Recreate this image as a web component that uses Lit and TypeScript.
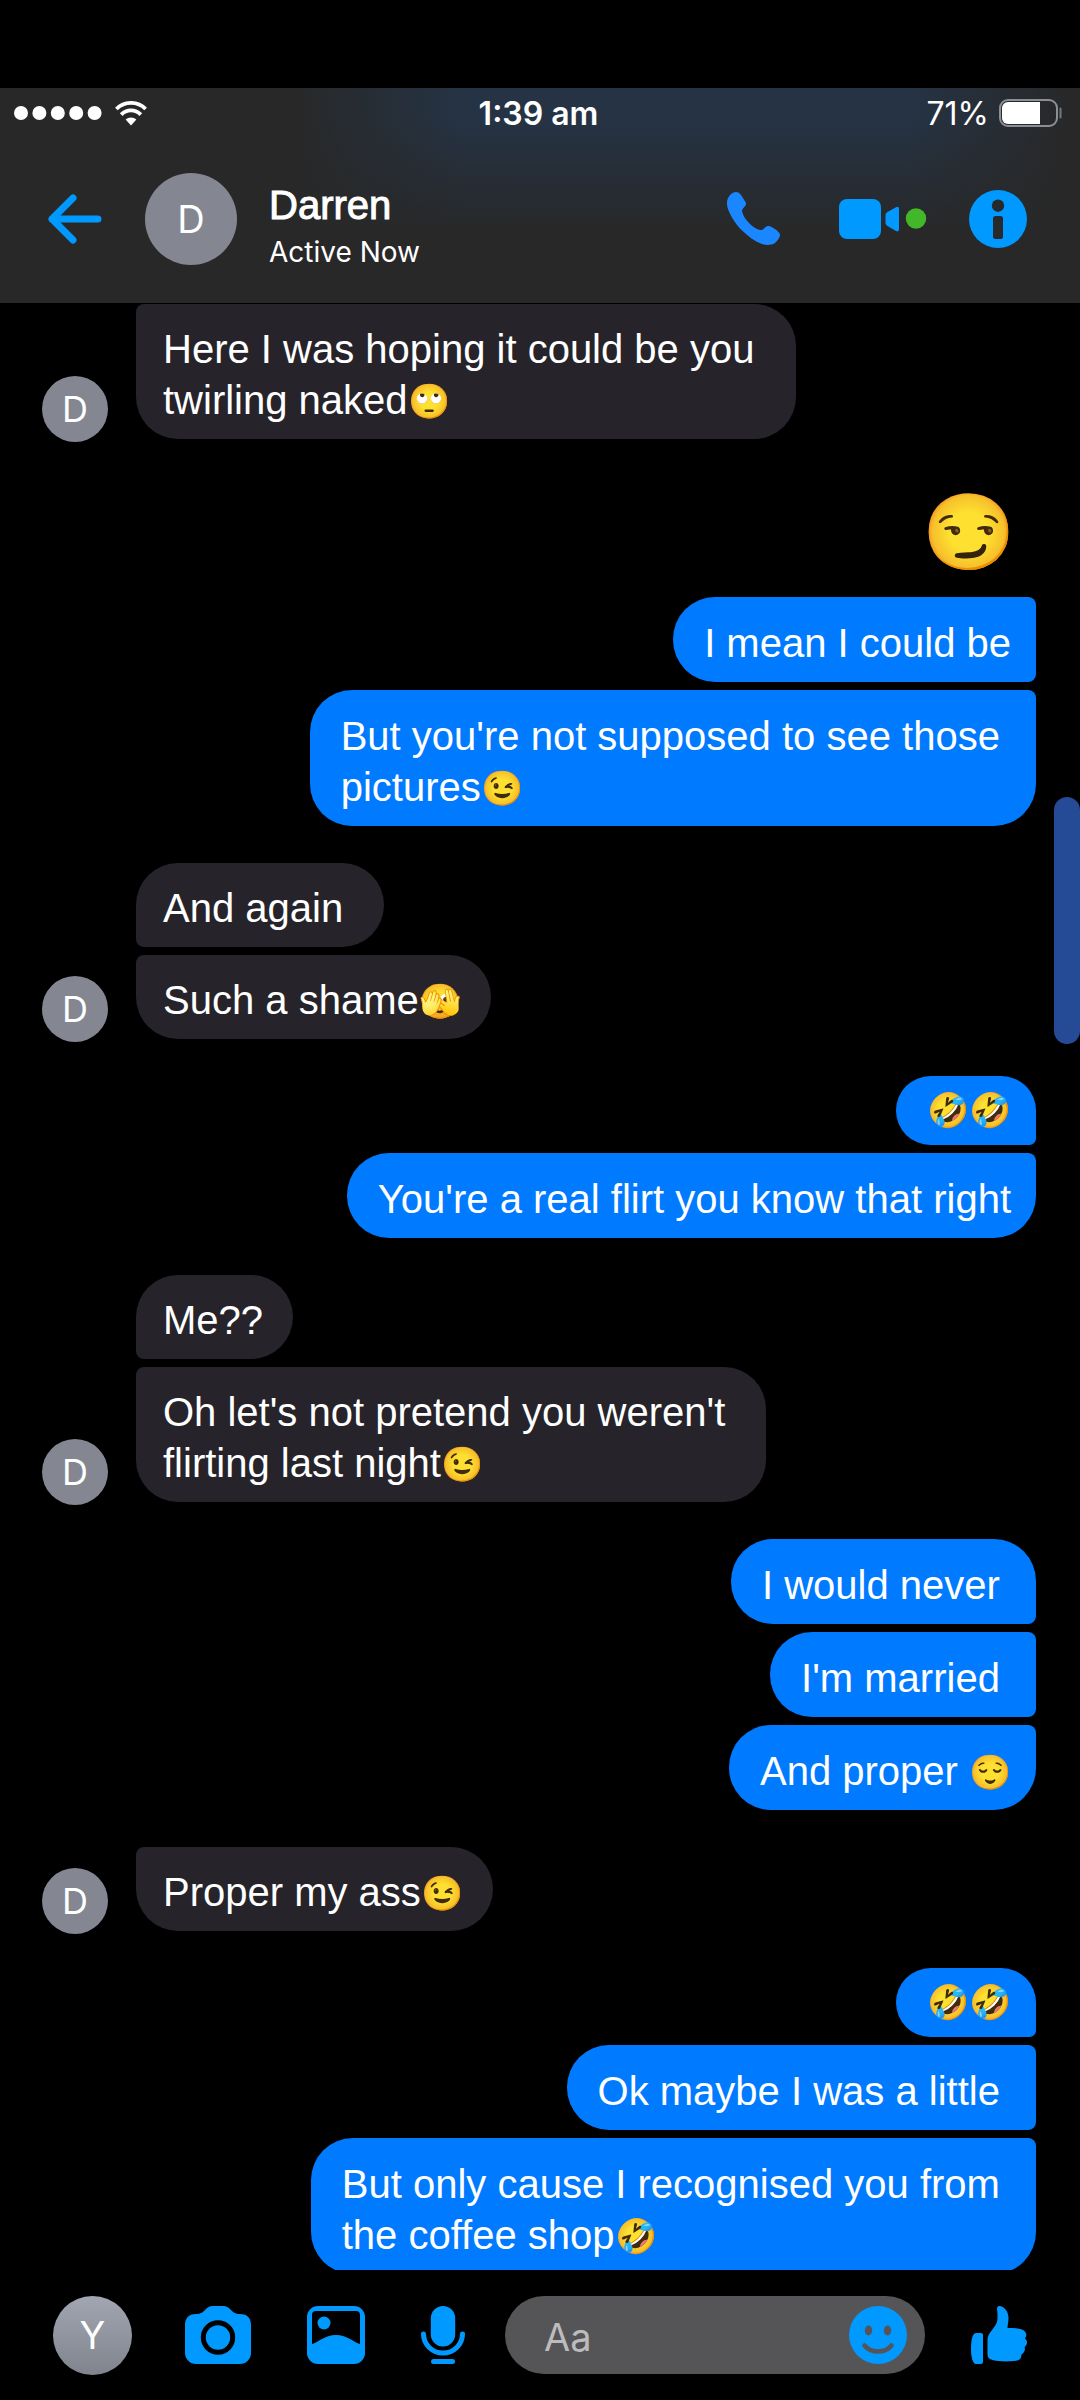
import { LitElement, html, css, nothing } from "lit";
import { customElement, property } from "lit/decorators.js";

type Message = {
  lines: string[];
  kind?: "text" | "emoji" | "sticker";
};

type Group = {
  from: "them" | "me";
  messages: Message[];
  joinedTop?: boolean;
};

const conversation: Group[] = [
  {
    from: "them",
    joinedTop: true,
    messages: [{ lines: ["Here I was hoping it could be you\u00a0", "twirling naked🙄"] }],
  },
  {
    from: "me",
    messages: [
      { lines: ["😏"], kind: "sticker" },
      { lines: ["I mean I could be"] },
      { lines: ["But you're not supposed to see those\u00a0", "pictures😉"] },
    ],
  },
  {
    from: "them",
    messages: [{ lines: ["And again\u00a0"] }, { lines: ["Such a shame🫣"] }],
  },
  {
    from: "me",
    messages: [
      { lines: ["🤣🤣"], kind: "emoji" },
      { lines: ["You're a real flirt you know that right"] },
    ],
  },
  {
    from: "them",
    messages: [
      { lines: ["Me??"] },
      { lines: ["Oh let's not pretend you weren't\u00a0", "flirting last night😉"] },
    ],
  },
  {
    from: "me",
    messages: [
      { lines: ["I would never\u00a0"] },
      { lines: ["I'm married\u00a0"] },
      { lines: ["And proper 😌"] },
    ],
  },
  { from: "them", joinedTop: true, messages: [{ lines: ["Proper my ass😉"] }] },
  {
    from: "me",
    messages: [
      { lines: ["🤣🤣"], kind: "emoji" },
      { lines: ["Ok maybe I was a little\u00a0"] },
      { lines: ["But only cause I recognised you from\u00a0", "the coffee shop🤣"] },
    ],
  },
];

@customElement("status-bar")
export class StatusBar extends LitElement {
  static styles = css`
    :host {
      display: grid;
      grid-template-columns: 1fr auto 1fr;
      align-items: center;
      height: 50px;
      padding: 0 17px 0 14px;
      font-size: 32px;
    }
    .signal {
      display: flex;
      align-items: center;
      gap: 13px;
    }
    .time {
      font-weight: 600;
    }
    .power {
      display: flex;
      align-items: center;
      justify-content: flex-end;
      gap: 10px;
    }
    svg {
      display: block;
    }
  `;

  render() {
    return html`
      <div class="signal">
        <svg width="88" height="14" viewBox="0 0 88 14" fill="#fff" aria-hidden="true">
          <circle cx="7" cy="7" r="7" />
          <circle cx="25.4" cy="7" r="7" />
          <circle cx="43.8" cy="7" r="7" />
          <circle cx="62.2" cy="7" r="7" />
          <circle cx="80.6" cy="7" r="7" />
        </svg>
        <svg width="32" height="25" viewBox="0 0 32 25" fill="none" stroke="#fff" stroke-width="3.8" aria-hidden="true">
          <path d="M1.4 8A20.5 20.5 0 0 1 30.6 8" />
          <path d="M6.2 13.6A13.6 13.6 0 0 1 25.8 13.6" />
          <path d="M10.6 18.6A8 8 0 0 1 21.4 18.6L16 24.4Z" fill="#fff" stroke="none" />
        </svg>
      </div>
      <div class="time">1:39 am</div>
      <div class="power">
        <span>71%</span>
        <svg width="64" height="28" viewBox="0 0 64 28" aria-hidden="true">
          <rect x="1" y="1" width="57" height="26" rx="8" fill="none" stroke="#8c9096" stroke-width="2" />
          <path d="M9 3H41V25H9A6 6 0 0 1 3 19V9A6 6 0 0 1 9 3Z" fill="#fff" />
          <path d="M61.500 9.500V18.500" stroke="#74787d" stroke-width="2" stroke-linecap="round" />
        </svg>
      </div>
    `;
  }
}

@customElement("chat-header")
export class ChatHeader extends LitElement {
  static styles = css`
    :host {
      display: flex;
      align-items: center;
      height: 161px;
      padding: 0 53px 4px 48px;
    }
    button {
      display: block;
      padding: 0;
      border: 0;
      background: none;
      cursor: pointer;
    }
    svg {
      display: block;
    }
    .avatar {
      display: grid;
      place-items: center;
      width: 92px;
      height: 92px;
      margin: 0 32px 0 43px;
      border-radius: 50%;
      background: #848791;
      font-size: 38px;
    }
    .who {
      flex: 1;
      padding-top: 16px;
    }
    h1 {
      margin: 0;
      font: 400 40px/50px "Liberation Sans", Arial, sans-serif;
      -webkit-text-stroke: 1px #fff;
    }
    p {
      margin: 0;
      font-size: 28px;
      line-height: 44px;
    }
    .actions {
      display: flex;
      align-items: center;
      gap: 42px;
    }
    .call {
      margin-right: 17px;
    }
  `;

  render() {
    return html`
      <button aria-label="Back">
        <svg width="54" height="50" viewBox="0 0 54 50" fill="none" stroke="#0099ff" stroke-width="7" stroke-linecap="round" stroke-linejoin="round" aria-hidden="true">
          <path d="M25 4L4 25L25 46M4 25H50" />
        </svg>
      </button>
      <div class="avatar">D</div>
      <div class="who">
        <h1>Darren</h1>
        <p>Active Now</p>
      </div>
      <div class="actions">
        <button class="call" aria-label="Call">
          <svg width="53" height="53" viewBox="0 0 53 53" fill="#1a86ff" aria-hidden="true">
            <path d="M9 0C11 0 12.5 1 14 3L18.5 10C19.5 12 19 13 17.5 14.8C15.5 17 14.8 18 15.2 20C16.5 24.5 19 28 22.5 31.5C25.5 34.5 29 37 33 38C35 38.3 36 37.5 37.500 36C39.5 34 41.5 33.600 43.5 34.5C46 35.600 49 37.5 51 39.5C53 41.5 53.500 43 52.5 45C51 48 49 50.5 47 51.8C44 53.300 39 53.3 35 52C28 49.5 21 44.5 14 37.5C7 30 2 21 .4 15C-.2 12 -.2 9 .8 6.5C2 4 4 2 6 .8C7 .3 8 0 9 0Z" />
          </svg>
        </button>
        <button aria-label="Video call, available">
          <svg width="88" height="42" viewBox="0 0 88 42" fill="#0099ff" aria-hidden="true">
            <rect y="1" width="42" height="40" rx="8" />
            <path d="M46.5 17Q46.5 15 48.5 14L57 9.2Q60 7.8 60 11V31Q60 34.500 57 33L48.5 28Q46.5 27 46.5 25Z" />
            <circle cx="77" cy="20.5" r="10.2" fill="#42b72a" />
          </svg>
        </button>
        <button aria-label="Conversation details">
          <svg width="58" height="58" viewBox="0 0 58 58" aria-hidden="true">
            <circle cx="29" cy="29" r="29" fill="#0099ff" />
            <circle cx="29" cy="15.7" r="6.2" fill="#262a2c" />
            <rect x="24" y="26" width="10" height="23" rx="2.5" fill="#262a2c" />
          </svg>
        </button>
      </div>
    `;
  }
}

@customElement("message-group")
export class MessageGroup extends LitElement {
  @property({ attribute: false }) group!: Group;

  static styles = css`
    :host {
      display: block;
    }
    .group {
      display: flex;
      align-items: flex-end;
      padding: 0 44px 0 42px;
    }
    .me {
      justify-content: flex-end;
    }
    .avatar {
      display: grid;
      place-items: center;
      flex: none;
      width: 66px;
      height: 66px;
      margin: 0 28px -3px 0;
      border-radius: 50%;
      background: #848791;
      font-size: 36px;
    }
    .stack {
      display: flex;
      flex-direction: column;
      align-items: flex-start;
      gap: 8px;
    }
    .me .stack {
      align-items: flex-end;
    }
    .bubble {
      padding: 20px 30px 13px 27px;
      border-radius: 8px 42px 42px 8px;
      background: #26242a;
      font: 400 40px/51px "Liberation Sans", Arial, sans-serif;
    }
    .them .bubble.first {
      border-top-left-radius: 42px;
    }
    .them .bubble.last {
      border-bottom-left-radius: 42px;
    }
    .me .bubble {
      padding: 21px 25px 13px 31px;
      border-radius: 42px 8px 8px 42px;
      background: #007aff;
    }
    .me .bubble.first {
      border-top-right-radius: 42px;
    }
    .me .bubble.last {
      border-bottom-right-radius: 42px;
    }
    .me .bubble.emoji {
      padding-top: 16px;
      padding-bottom: 18px;
      line-height: 35px;
    }
    .glyph {
      font-size: 34px;
      line-height: 0;
      vertical-align: 1px;
    }
    .sticker {
      padding: 0 21px 4px 0;
      font-size: 75px;
      line-height: 109px;
    }
  `;

  private line(text: string) {
    const parts = text
      .split(/(\p{Extended_Pictographic}+)/u)
      .map((part, i) => (i % 2 ? html`<span class="glyph">${part}</span>` : part));
    return html`<div>${parts}</div>`;
  }

  render() {
    const { from, messages, joinedTop } = this.group;
    const lastIndex = messages.length - 1;
    return html`
      <div class="group ${from}">
        ${from === "them" ? html`<div class="avatar">D</div>` : nothing}
        <div class="stack">
          ${messages.map((m, i) => {
            if (m.kind === "sticker") return html`<div class="sticker">${m.lines[0]}</div>`;
            const cls = [
              "bubble",
              m.kind === "emoji" ? "emoji" : "",
              i === 0 && !joinedTop ? "first" : "",
              i === lastIndex ? "last" : "",
            ].join(" ");
            return html`<div class=${cls}>${m.lines.map((l) => this.line(l))}</div>`;
          })}
        </div>
      </div>
    `;
  }
}

@customElement("chat-composer")
export class ChatComposer extends LitElement {
  static styles = css`
    :host {
      display: flex;
      align-items: center;
      height: 130px;
      padding: 0 53px;
    }
    button {
      display: block;
      flex: none;
      padding: 0;
      border: 0;
      background: none;
      cursor: pointer;
    }
    svg {
      display: block;
    }
    .avatar {
      display: grid;
      place-items: center;
      flex: none;
      width: 79px;
      height: 79px;
      border-radius: 50%;
      background: linear-gradient(#a1a6b2, #80848d);
      font-size: 38px;
    }
    .tools {
      display: flex;
      gap: 56px;
      margin: 0 40px 0 53px;
    }
    .field {
      display: flex;
      align-items: center;
      flex: 1;
      min-width: 0;
      height: 78px;
      margin-right: 46px;
      padding: 0 18px 0 39px;
      border-radius: 39px;
      background: #555557;
    }
    input {
      flex: 1;
      min-width: 0;
      padding: 4px 0 0;
      border: 0;
      outline: 0;
      background: none;
      color: #fff;
      font: 400 38px/50px Inter, sans-serif;
    }
    input::placeholder {
      color: #bcbcbe;
      opacity: 1;
    }
  `;

  render() {
    return html`
      <div class="avatar">Y</div>
      <div class="tools">
        <button aria-label="Camera">
          <svg width="66" height="58" viewBox="0 0 66 58" fill="#0099ff" aria-hidden="true">
            <path d="M0 19C0 11 5 8 11 8C16 8 18 6 20 4C22 2 24 0 28 0H38C42 0 44 2 46 4C48 6 50 8 55 8C61 8 66 11 66 19V47A11 11 0 0 1 55 58H11A11 11 0 0 1 0 47Z" />
            <circle cx="33" cy="31.5" r="14.7" stroke="#000" stroke-width="5" />
          </svg>
        </button>
        <button aria-label="Photos">
          <svg width="58" height="58" viewBox="0 0 58 58" fill="#0099ff" aria-hidden="true">
            <rect width="58" height="58" rx="11" />
            <path d="M9 5H49Q53 5 53 9V38C49 37.5 40 29 29 29S9 37.5 5 38V9Q5 5 9 5Z" fill="#000" />
            <circle cx="17" cy="17" r="6.5" />
          </svg>
        </button>
        <button aria-label="Voice message">
          <svg width="44" height="58" viewBox="0 0 44 58" fill="#0099ff" aria-hidden="true">
            <rect x="9.8" width="24.4" height="40.5" rx="12.2" />
            <path d="M2.5 28A19.5 19 0 0 0 41.5 28" fill="none" stroke="#0099ff" stroke-width="5" stroke-linecap="round" />
            <rect x="10" y="53" width="24" height="5" rx="2.5" />
          </svg>
        </button>
      </div>
      <div class="field">
        <input type="text" placeholder="Aa" aria-label="Message" />
        <button aria-label="Emoji">
          <svg width="58" height="58" viewBox="0 0 58 58" aria-hidden="true">
            <circle cx="29" cy="29" r="29" fill="#0099ff" />
            <ellipse cx="19.5" cy="24.5" rx="3.7" ry="5" fill="#555557" />
            <ellipse cx="38.5" cy="24.5" rx="3.7" ry="5" fill="#555557" />
            <path d="M15.5 39.5C22 47.500 36 47.5 42.5 39.5" fill="none" stroke="#555557" stroke-width="4.5" stroke-linecap="round" />
          </svg>
        </button>
      </div>
      <button aria-label="Send a like">
        <svg width="56" height="58" viewBox="0 0 56 58" fill="#0099ff" aria-hidden="true">
          <path d="M5 27H10Q12 27 12 29V56Q12 58 10 58H5C1.5 58 0 50 0 43S1 27 5 27Z" />
          <path d="M26 2.5C26 .5 27.5 0 29 0C34 1 37.5 6 37.5 12C37.5 16 36.5 19 36.5 22C42 22 47 22 51 23.5C54.5 25 56 28 55 30.5C54.7 31.5 54 32 54 32.5C56.5 34.5 57 38 53.5 41C54.5 42.5 54 46.5 50.5 48.5C50.5 52 49 54 45 54.8C38 55.8 27 55.8 20 53.5C17.5 52.5 16.5 51 16.5 48V34C16.5 27 24 22 26 16C27 12 26.5 7 26 2.5Z" />
        </svg>
      </button>
    `;
  }
}

@customElement("app-root")
export class AppRoot extends LitElement {
  static styles = css`
    :host {
      display: flex;
      flex-direction: column;
      box-sizing: border-box;
      height: 100vh;
      padding-top: 88px;
      position: relative;
      background: #000;
      color: #fff;
      font-family: Inter, "Liberation Sans", sans-serif;
    }
    header {
      flex: none;
      background:
        linear-gradient(90deg, #282828 27%, rgba(40, 40, 40, 0) 43%, rgba(40, 40, 40, 0) 84%, #282828 99%),
        linear-gradient(#253344 15%, #282828 68%);
    }
    main {
      display: flex;
      flex-direction: column;
      gap: 37px;
      flex: 1;
      min-height: 0;
      padding-top: 1px;
      overflow: hidden;
    }
    message-group {
      flex: none;
    }
    .thumb {
      position: absolute;
      top: 797px;
      right: 0;
      width: 26px;
      height: 247px;
      border-radius: 13px;
      background: #264b96;
    }
  `;

  render() {
    return html`
      <header>
        <status-bar></status-bar>
        <chat-header></chat-header>
      </header>
      <main>
        ${conversation.map((g) => html`<message-group .group=${g}></message-group>`)}
      </main>
      <chat-composer></chat-composer>
      <div class="thumb"></div>
    `;
  }
}
